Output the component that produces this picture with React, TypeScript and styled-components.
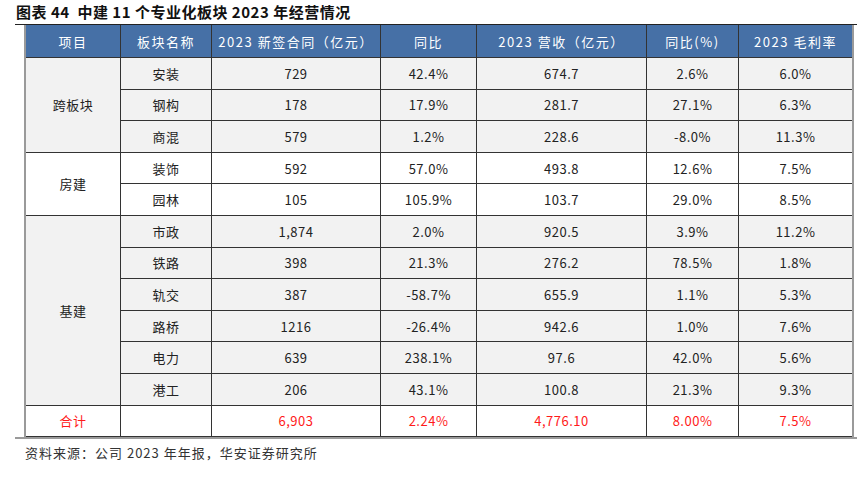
import React from "react";
import styled, { createGlobalStyle } from "styled-components";

const GlobalStyle = createGlobalStyle`
  body {
    margin: 0;
    background: #ffffff;
    font-family: "Noto Sans CJK SC", "Liberation Sans", sans-serif;
  }
`;

const Page = styled.div`
  width: 866px;
  height: 480px;
  padding-left: 15px;
  box-sizing: border-box;
`;

const Title = styled.div`
  height: 24px;
  line-height: 24px;
  padding-left: 1px;
  font-size: 15px;
  font-weight: bold;
  color: #111;
  letter-spacing: 0.5px;
`;

const Frame = styled.div`
  width: 842px;
  border-top: 1px solid #222;
  border-bottom: 2px solid #9a9a9a;
`;

const Table = styled.table`
  margin-left: 9px;
  border-collapse: collapse;
  table-layout: fixed;
  border-left: 2px solid #9a9a9a;
  border-right: 2px solid #9a9a9a;
`;

const HeadCell = styled.th<{ w: number }>`
  width: ${(p) => p.w}px;
  height: 32px;
  padding: 0;
  background: #4670a6;
  color: #ffffff;
  font-weight: normal;
  font-size: 13px;
  border-left: 1px solid #333;
  border-right: 1px solid #333;
  border-bottom: 1px solid #333;
  letter-spacing: 1.5px;
`;

const Row = styled.tr<{ shade: boolean }>`
  height: 31.6px;
  background: ${(p) => (p.shade ? "#f2f2f2" : "#ffffff")};
`;

const Cell = styled.td<{ red?: boolean }>`
  padding: 0;
  text-align: center;
  font-size: 13px;
  color: ${(p) => (p.red ? "#ff1a1a" : "#222")};
  border: 1px solid #333;
  letter-spacing: 0.5px;
`;

const Source = styled.div`
  padding-left: 10px;
  padding-top: 4px;
  font-size: 13px;
  color: #333;
  letter-spacing: 1px;
`;

const cols = [94, 90, 168, 95, 169, 91, 113];
const heads = ["项目", "板块名称", "2023 新签合同（亿元）", "同比", "2023 营收（亿元）", "同比(%)", "2023 毛利率"];

type Seg = { name: string; vals: string[] };
type Group = { label: string; shade: boolean; segs: Seg[] };

const groups: Group[] = [
  {
    label: "跨板块",
    shade: true,
    segs: [
      { name: "安装", vals: ["729", "42.4%", "674.7", "2.6%", "6.0%"] },
      { name: "钢构", vals: ["178", "17.9%", "281.7", "27.1%", "6.3%"] },
      { name: "商混", vals: ["579", "1.2%", "228.6", "-8.0%", "11.3%"] },
    ],
  },
  {
    label: "房建",
    shade: false,
    segs: [
      { name: "装饰", vals: ["592", "57.0%", "493.8", "12.6%", "7.5%"] },
      { name: "园林", vals: ["105", "105.9%", "103.7", "29.0%", "8.5%"] },
    ],
  },
  {
    label: "基建",
    shade: true,
    segs: [
      { name: "市政", vals: ["1,874", "2.0%", "920.5", "3.9%", "11.2%"] },
      { name: "铁路", vals: ["398", "21.3%", "276.2", "78.5%", "1.8%"] },
      { name: "轨交", vals: ["387", "-58.7%", "655.9", "1.1%", "5.3%"] },
      { name: "路桥", vals: ["1216", "-26.4%", "942.6", "1.0%", "7.6%"] },
      { name: "电力", vals: ["639", "238.1%", "97.6", "42.0%", "5.6%"] },
      { name: "港工", vals: ["206", "43.1%", "100.8", "21.3%", "9.3%"] },
    ],
  },
];

const total = ["6,903", "2.24%", "4,776.10", "8.00%", "7.5%"];

export default function App() {
  return (
    <Page>
      <GlobalStyle />
      <Title>图表 44 &nbsp;中建 11 个专业化板块 2023 年经营情况</Title>
      <Frame>
        <Table>
          <thead>
            <tr>
              {heads.map((h, i) => (
                <HeadCell key={h} w={cols[i]}>
                  {h}
                </HeadCell>
              ))}
            </tr>
          </thead>
          <tbody>
            {groups.map((g) =>
              g.segs.map((s, i) => (
                <Row key={s.name} shade={g.shade}>
                  {i === 0 && <Cell rowSpan={g.segs.length}>{g.label}</Cell>}
                  <Cell>{s.name}</Cell>
                  {s.vals.map((v, j) => (
                    <Cell key={j}>{v}</Cell>
                  ))}
                </Row>
              ))
            )}
            <Row shade={false}>
              <Cell red>合计</Cell>
              <Cell />
              {total.map((v, j) => (
                <Cell key={j} red>
                  {v}
                </Cell>
              ))}
            </Row>
          </tbody>
        </Table>
      </Frame>
      <Source>资料来源：公司 2023 年年报，华安证券研究所</Source>
    </Page>
  );
}
